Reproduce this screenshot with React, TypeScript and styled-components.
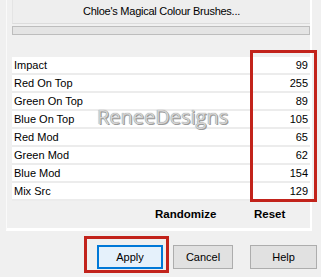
import React from 'react';
import styled, { createGlobalStyle } from 'styled-components';

const GlobalStyle = createGlobalStyle`
  html, body {
    margin: 0;
    padding: 0;
    background: #f0f0f0;
  }
  body {
    font-family: "Liberation Sans", Arial, sans-serif;
    font-size: 11px;
    color: #000;
  }
`;

const Dialog = styled.div`
  position: relative;
  width: 321px;
  height: 277px;
  overflow: hidden;
  background: #f0f0f0;
`;

const Panel = styled.div`
  box-sizing: border-box;
  margin-left: 6px;
  width: 306px;
  height: 231px;
  border-left: 1px solid #fafafa;
  border-right: 2px solid #fff;
  border-bottom: 3px solid #fff;
  padding-left: 5px;
  display: flex;
  flex-direction: column;
`;

const Header = styled.div`
  flex: none;
  height: 24px;
  box-sizing: border-box;
  border-left: 1px solid #e4e4e4;
  border-bottom: 1px solid #dcdcdc;
  background: #eeeeee;
  display: flex;
  align-items: center;
  justify-content: center;
  letter-spacing: -0.25px;
  padding-bottom: 1px;
`;

const Track = styled.div`
  flex: none;
  margin-top: 2px;
  height: 9px;
  box-sizing: border-box;
  border: 1px solid #bdbdbd;
  background: #e4e4e4;
`;

const List = styled.div`
  flex: none;
  margin-top: 22px;
  display: flex;
  flex-direction: column;
`;

const Row = styled.div`
  flex: none;
  height: 16px;
  border-bottom: 2px solid #ececec;
  background: #fff;
  display: flex;
  align-items: center;
  justify-content: space-between;
  padding: 0 2px 0 2px;
`;

const Value = styled.span`
  text-align: right;
`;

const Actions = styled.div`
  flex: 1;
  display: grid;
  grid-template-columns: 143px 99px auto;
  align-items: center;
  font-weight: bold;
  font-size: 11.5px;
  padding-bottom: 2px;
`;

const Footer = styled.div`
  display: flex;
  justify-content: flex-end;
  padding: 14px 4px 0 0;
`;

const Button = styled.button<{ $w: number; $gap: number; $primary?: boolean }>`
  box-sizing: border-box;
  width: ${(p) => p.$w}px;
  height: 24px;
  margin-left: ${(p) => p.$gap}px;
  font-family: "Liberation Sans", Arial, sans-serif;
  font-size: 11px;
  color: #000;
  padding: 0;
  background: ${(p) => (p.$primary ? '#e5f1fb' : '#e1e1e1')};
  border: ${(p) => (p.$primary ? '2px solid #0078d7' : '1px solid #adadad')};
`;

const Watermark = styled.div`
  position: absolute;
  left: 97px;
  top: 103px;
  font-family: "Open Sans", sans-serif;
  font-size: 20px;
  color: #d4d4d4;
  text-shadow: 0 0 1px #707070, 1px 1px 0 #a0a0a0;
  pointer-events: none;
`;

const Mark = styled.div<{ $x: number; $y: number; $w: number; $h: number }>`
  position: absolute;
  left: ${(p) => p.$x}px;
  top: ${(p) => p.$y}px;
  width: ${(p) => p.$w}px;
  height: ${(p) => p.$h}px;
  box-sizing: border-box;
  border: 3px solid #c2231b;
  pointer-events: none;
`;

const rows: [string, number][] = [
  ['Impact', 99],
  ['Red On Top', 255],
  ['Green On Top', 89],
  ['Blue On Top', 105],
  ['Red Mod', 65],
  ['Green Mod', 62],
  ['Blue Mod', 154],
  ['Mix Src', 129],
];

const App: React.FC = () => (
  <>
    <GlobalStyle />
    <Dialog>
      <Panel>
        <Header>Chloe&apos;s Magical Colour Brushes...</Header>
        <Track />
        <List>
          {rows.map(([label, value]) => (
            <Row key={label}>
              <span>{label}</span>
              <Value>{value}</Value>
            </Row>
          ))}
        </List>
        <Actions>
          <span />
          <span>Randomize</span>
          <span>Reset</span>
        </Actions>
      </Panel>
      <Footer>
        <Button $w={66} $gap={0} $primary>Apply</Button>
        <Button $w={60} $gap={10}>Cancel</Button>
        <Button $w={67} $gap={17}>Help</Button>
      </Footer>
      <Watermark>ReneeDesigns</Watermark>
      <Mark $x={250} $y={50} $w={67} $h={152} />
      <Mark $x={84} $y={236} $w={85} $h={37} />
    </Dialog>
  </>
);

export default App;
